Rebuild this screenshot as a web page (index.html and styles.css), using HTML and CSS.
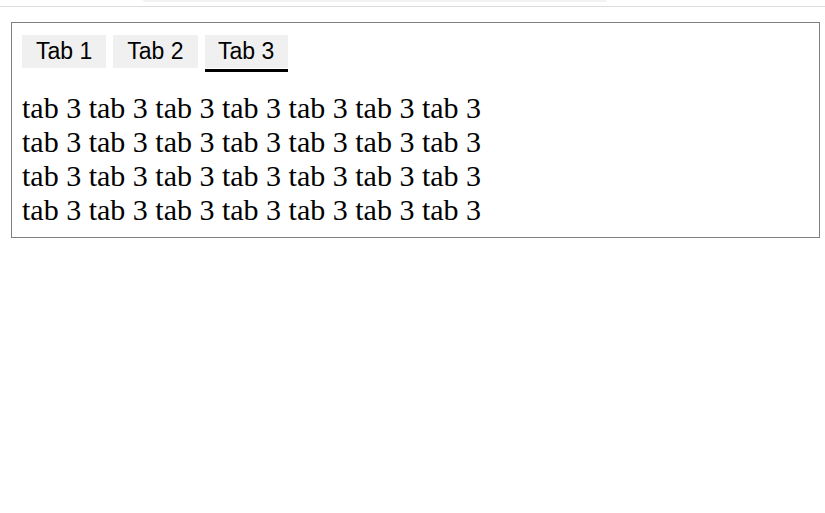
FILE: index.html
```html
<!DOCTYPE html>
<html>
<head>
<meta charset="utf-8">
<link rel="stylesheet" href="styles.css">
</head>
<body>
<div class="topbar"><div class="topbar-pill"></div></div>
<div class="panel">
  <div class="tabs">
    <button class="tab">Tab 1</button>
    <button class="tab">Tab 2</button>
    <button class="tab active">Tab 3</button>
  </div>
  <p class="content">tab 3 tab 3 tab 3 tab 3 tab 3 tab 3 tab 3 tab 3 tab 3 tab 3 tab 3 tab 3 tab 3 tab 3 tab 3 tab 3 tab 3 tab 3 tab 3 tab 3 tab 3 tab 3 tab 3 tab 3 tab 3 tab 3 tab 3 tab 3</p>
</div>
</body>
</html>
```
FILE: styles.css
```css
html, body {
  margin: 0;
  padding: 0;
  background: #fff;
}
.topbar {
  height: 6px;
  border-bottom: 1px solid #dcdcdc;
}
.topbar-pill {
  margin-left: 143px;
  width: 464px;
  height: 2px;
  background: #f2f2f2;
  border-radius: 0 0 3px 3px;
}
.panel {
  margin: 15px 5px 0 11px;
  border: 1px solid #808080;
  padding: 12px 10px 10px 10px;
}
.tabs {
  display: flex;
  align-items: flex-start;
  gap: 7px;
}
.tab {
  font-family: "Liberation Sans", Arial, sans-serif;
  font-size: 23px;
  color: #000;
  background: #f0f0f0;
  border: none;
  margin: 0;
  padding: 0 14px;
  height: 33px;
  line-height: 33px;
  box-sizing: border-box;
}
.tab.active {
  height: 37px;
  padding: 0 13.5px 1px 13.5px;
  border-bottom: 3px solid #000;
  background-clip: padding-box;
  box-shadow: inset 0 -1px 0 #fff;
  display: flex;
  align-items: flex-start;
}
.content {
  font-family: "Liberation Serif", "Times New Roman", serif;
  font-size: 30px;
  line-height: 34px;
  width: 490px;
  margin: 19px 0 0 0;
  color: #000;
}
```
